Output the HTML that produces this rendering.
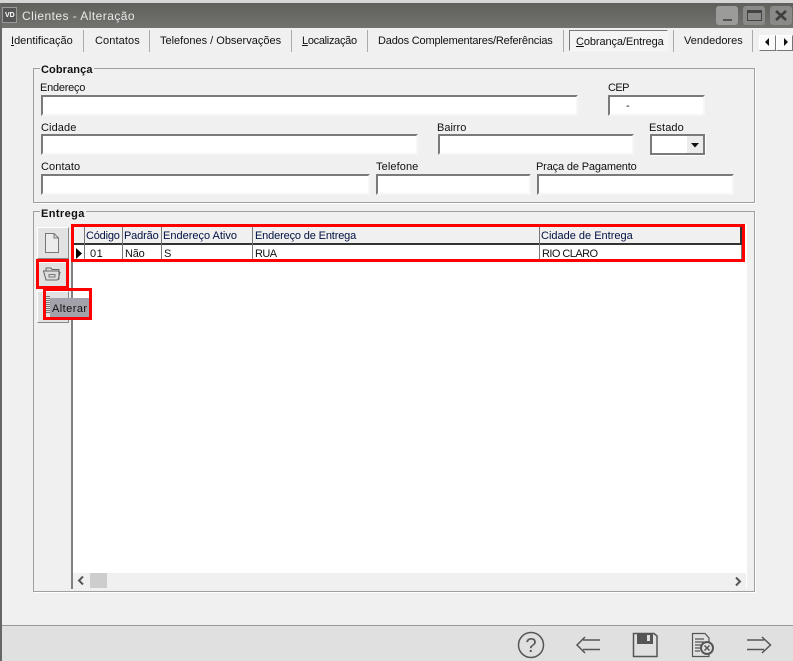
<!DOCTYPE html>
<html><head><meta charset="utf-8"><style>
html,body{margin:0;padding:0;width:793px;height:661px;overflow:hidden;background:#f0f0f0}
body{position:relative;font:11px "Liberation Sans",sans-serif;color:#111}
div,span.t,svg{position:absolute}
span.t{white-space:nowrap;line-height:13px}
.i{background:#fff;box-sizing:border-box;border:2px solid;border-color:#7a7a7a #f6f6f6 #f6f6f6 #7a7a7a;outline:0}
.sep{width:1px;height:22px;top:30px;background:#aaa}
.g{box-sizing:border-box;border:1px solid #a0a0a0;box-shadow:1px 1px 0 #fff}
.v{width:1px;background:#777;top:226px;height:34px}
.btn{box-sizing:border-box;background:#e2e2e2;border:1px solid;border-color:#fff #888 #888 #fff}
.red{box-sizing:border-box;border:3px solid #f00}
.b{font-weight:bold}
u{text-decoration:underline}
</style></head><body>
<div style="left:0;top:0;width:793px;height:3px;background:#d6d6d6"></div>
<div style="left:0;top:3px;width:793px;height:25px;background:linear-gradient(#5f5f5b,#72726e)"></div>
<div style="left:0;top:3px;width:2px;height:658px;background:#666"></div>
<div style="left:2px;top:7px;width:15px;height:16px;box-sizing:border-box;border:1px solid #999;background:#555"></div>
<span class="t" style="left:5px;top:11px;font-size:7px;line-height:9px;color:#fff;font-weight:bold">VD</span>
<span class="t" style="left:22px;top:10px;font-size:12px;color:#e8e8e8;letter-spacing:.45px">Clientes - Alteração</span>
<div style="left:716px;top:6px;width:22px;height:19px;background:#9b9b99;border-radius:3px"></div>
<div style="left:723px;top:19px;width:9px;height:2px;background:#555"></div>
<div style="left:743px;top:6px;width:22px;height:19px;background:#8a8a88;border-radius:3px"></div>
<div style="left:747px;top:10px;width:15px;height:11px;box-sizing:border-box;border:1px solid #444;border-top:3px solid #444"></div>
<div style="left:770px;top:6px;width:22px;height:19px;background:#8a8a88;border-radius:3px"></div>
<svg style="left:775px;top:10px" width="12" height="11"><path d="M1 1L11 10M11 1L1 10" stroke="#3f3f3f" stroke-width="2.6"/></svg>

<span class="t" style="left:11px;top:35px"><u>I</u>dentificação</span>
<div class="sep" style="left:83px"></div>
<span class="t" style="left:95px;top:35px;letter-spacing:.1px">Contatos</span>
<div class="sep" style="left:149px"></div>
<span class="t" style="left:160px;top:35px">Telefones / Observações</span>
<div class="sep" style="left:291px"></div>
<span class="t" style="left:302px;top:35px;letter-spacing:-.3px"><u>L</u>ocalização</span>
<div class="sep" style="left:367px"></div>
<span class="t" style="left:378px;top:35px;letter-spacing:-.18px">Dados Complementares/Referências</span>
<div class="sep" style="left:563px"></div>
<div style="left:569px;top:30px;width:99px;height:21px;box-sizing:border-box;border:1px solid;border-color:#777 #f8f8f8 #f8f8f8 #777;background:#f4f4f4"></div>
<span class="t" style="left:576px;top:36px;letter-spacing:-.1px"><u>C</u>obrança/Entrega</span>
<div class="sep" style="left:673px"></div>
<span class="t" style="left:684px;top:35px">Vendedores</span>
<div class="sep" style="left:752px"></div>
<div style="left:759px;top:35px;width:17px;height:16px;box-sizing:border-box;background:#fafafa;border:1px solid;border-color:#fff #777 #777 #fff"></div>
<div style="left:776px;top:35px;width:17px;height:16px;box-sizing:border-box;background:#fafafa;border:1px solid;border-color:#fff #777 #777 #fff"></div>
<svg style="left:764px;top:38px" width="8" height="9"><path d="M5 0V8L1 4Z" fill="#111"/></svg>
<svg style="left:782px;top:38px" width="8" height="9"><path d="M2 0V8L6 4Z" fill="#111"/></svg>

<div class="g" style="left:33px;top:68px;width:722px;height:135px"></div>
<span class="t b" style="left:40px;top:64px;background:#f0f0f0;padding:0 1px;letter-spacing:.1px">Cobrança</span>
<span class="t" style="left:40px;top:82px;letter-spacing:-.25px">Endereço</span>
<div class="i" style="left:41px;top:95px;width:537px;height:21px"></div>
<span class="t" style="left:608px;top:82px;letter-spacing:-.6px">CEP</span>
<div class="i" style="left:608px;top:95px;width:97px;height:21px"></div>
<span class="t" style="left:626px;top:100px">-</span>
<span class="t" style="left:41px;top:122px;letter-spacing:.1px">Cidade</span>
<div class="i" style="left:41px;top:134px;width:377px;height:21px"></div>
<span class="t" style="left:437px;top:122px">Bairro</span>
<div class="i" style="left:438px;top:134px;width:196px;height:21px"></div>
<span class="t" style="left:649px;top:122px;letter-spacing:.1px">Estado</span>
<div class="i" style="left:650px;top:134px;width:55px;height:21px;border-color:#7a7a7a;box-shadow:1px 1px 0 #fff"></div>
<div style="left:687px;top:136px;width:16px;height:17px;background:#ececec"></div>
<svg style="left:691px;top:143px" width="9" height="5"><path d="M0 0H8L4 4.500Z" fill="#111"/></svg>
<span class="t" style="left:41px;top:161px;letter-spacing:.1px">Contato</span>
<div class="i" style="left:41px;top:174px;width:329px;height:21px"></div>
<span class="t" style="left:376px;top:161px;letter-spacing:.1px">Telefone</span>
<div class="i" style="left:376px;top:174px;width:155px;height:21px"></div>
<span class="t" style="left:536px;top:161px;letter-spacing:-.15px">Praça de Pagamento</span>
<div class="i" style="left:537px;top:174px;width:197px;height:21px"></div>

<div class="g" style="left:33px;top:211px;width:722px;height:381px"></div>
<span class="t b" style="left:40px;top:208px;background:#f0f0f0;padding:0 1px;letter-spacing:.4px">Entrega</span>

<!-- grid -->
<div style="left:71px;top:224px;width:676px;height:365px;background:#fff;border-left:2px solid #808080;box-sizing:border-box"></div>
<div style="left:73px;top:226px;width:667px;height:17px;background:#f0f0f0"></div>
<div style="left:73px;top:243px;width:669px;height:2px;background:#333"></div>
<div style="left:73px;top:259px;width:669px;height:1px;background:#999"></div>
<div class="v" style="left:84px"></div>
<div class="v" style="left:122px"></div>
<div class="v" style="left:161px"></div>
<div class="v" style="left:252px"></div>
<div class="v" style="left:539px"></div>
<div style="left:740px;top:226px;width:2px;height:17px;background:#333"></div>
<div style="left:741px;top:245px;width:1px;height:15px;background:#777"></div>
<span class="t" style="left:86px;top:230px;letter-spacing:-.2px;color:#001040">Código</span>
<span class="t" style="left:124px;top:230px;letter-spacing:-.15px;color:#001040">Padrão</span>
<span class="t" style="left:163px;top:230px;color:#001040">Endereço Ativo</span>
<span class="t" style="left:255px;top:230px;letter-spacing:-.15px;color:#001040">Endereço de Entrega</span>
<span class="t" style="left:541px;top:230px;color:#001040">Cidade de Entrega</span>
<svg style="left:76px;top:248px" width="8" height="12"><path d="M0 0V11L6 5.500Z" fill="#000"/></svg>
<span class="t" style="left:90px;top:248px;letter-spacing:.5px">01</span>
<span class="t" style="left:125px;top:248px;letter-spacing:-.2px">Não</span>
<span class="t" style="left:164px;top:248px">S</span>
<span class="t" style="left:255px;top:248px;letter-spacing:-.6px">RUA</span>
<span class="t" style="left:542px;top:248px;letter-spacing:-.55px">RIO CLARO</span>

<!-- scrollbar -->
<div style="left:73px;top:573px;width:673px;height:16px;background:#f0f0f0"></div>
<div style="left:90px;top:573px;width:17px;height:15px;background:#cdcdcd"></div>
<svg style="left:77px;top:576px" width="8" height="9"><path d="M6 .500L2 4.500L6 8.500" fill="none" stroke="#555" stroke-width="2"/></svg>
<svg style="left:734px;top:577px" width="8" height="9"><path d="M2 .500L6 4.500L2 8.500" fill="none" stroke="#555" stroke-width="2"/></svg>

<!-- side buttons -->
<div class="btn" style="left:37px;top:227px;width:32px;height:32px"></div>
<svg style="left:43px;top:232px" width="18" height="22"><path d="M2.500 1.500H11L15.500 6V20.500H2.500ZM11 1.500V6H15.500" fill="#ececec" stroke="#777"/></svg>
<div class="btn" style="left:37px;top:262px;width:31px;height:26px"></div>
<svg style="left:42px;top:266px" width="20" height="16"><path d="M4 5V2H9L10 3.500H17V13L15 14H4L1.500 5Z" fill="#ddd" stroke="#666"/><path d="M1.500 5H16L18 6.500L16 14" fill="none" stroke="#666"/><rect x="7" y="8.500" width="6" height="2.500" fill="none" stroke="#777"/></svg>
<div class="btn" style="left:37px;top:291px;width:32px;height:32px"></div>
<div style="left:46px;top:296px;width:4px;height:18px;background:repeating-linear-gradient(#777 0 1px,#ddd 1px 2px)"></div>
<div style="left:50px;top:298px;width:40px;height:20px;background:#a3a1a9"></div>
<span class="t" style="left:52px;top:303px;letter-spacing:.45px">Alterar</span>

<!-- red annotations -->
<div class="red" style="left:71px;top:224px;width:674px;height:38px"></div>
<div class="red" style="left:36px;top:259px;width:33px;height:30px"></div>
<div class="red" style="left:43px;top:288px;width:49px;height:32px"></div>

<!-- bottom -->
<div style="left:2px;top:625px;width:791px;height:36px;background:#e0e0e0;border-top:1px solid #999;box-sizing:border-box"></div>
<svg style="left:515px;top:630px" width="278" height="31" fill="none" stroke="#555" stroke-width="1.500">
<circle cx="16" cy="15" r="12.500"/>
<text x="16" y="22" text-anchor="middle" font-family="Liberation Sans" font-size="20" fill="#555" stroke="none">?</text>
<path d="M85 10H68M85 19.500H68M70 7L62 15L70 23" stroke-width="1.500"/>
<path d="M118.500 3.500H139L142 6V26.500H118.500Z"/>
<rect x="122" y="3.500" width="16" height="10.500" fill="#555" stroke="none"/>
<rect x="132" y="5" width="3" height="6" fill="#e0e0e0" stroke="none"/>
<path d="M177.500 3.500H190L194 8V26.500H177.500ZM180 9H189M180 12H189M180 15H186M180 18H185M180 21H185" stroke-width="1.200"/>
<circle cx="192" cy="18" r="6" fill="#e0e0e0" stroke-width="2"/>
<path d="M189.500 15.500L194.500 20.500M194.500 15.500L189.500 20.500" stroke-width="1.500"/>
<path d="M232 10H249M232 19.500H249M247 7L255.500 15L247 23" stroke-width="1.500"/>
</svg>
</body></html>
